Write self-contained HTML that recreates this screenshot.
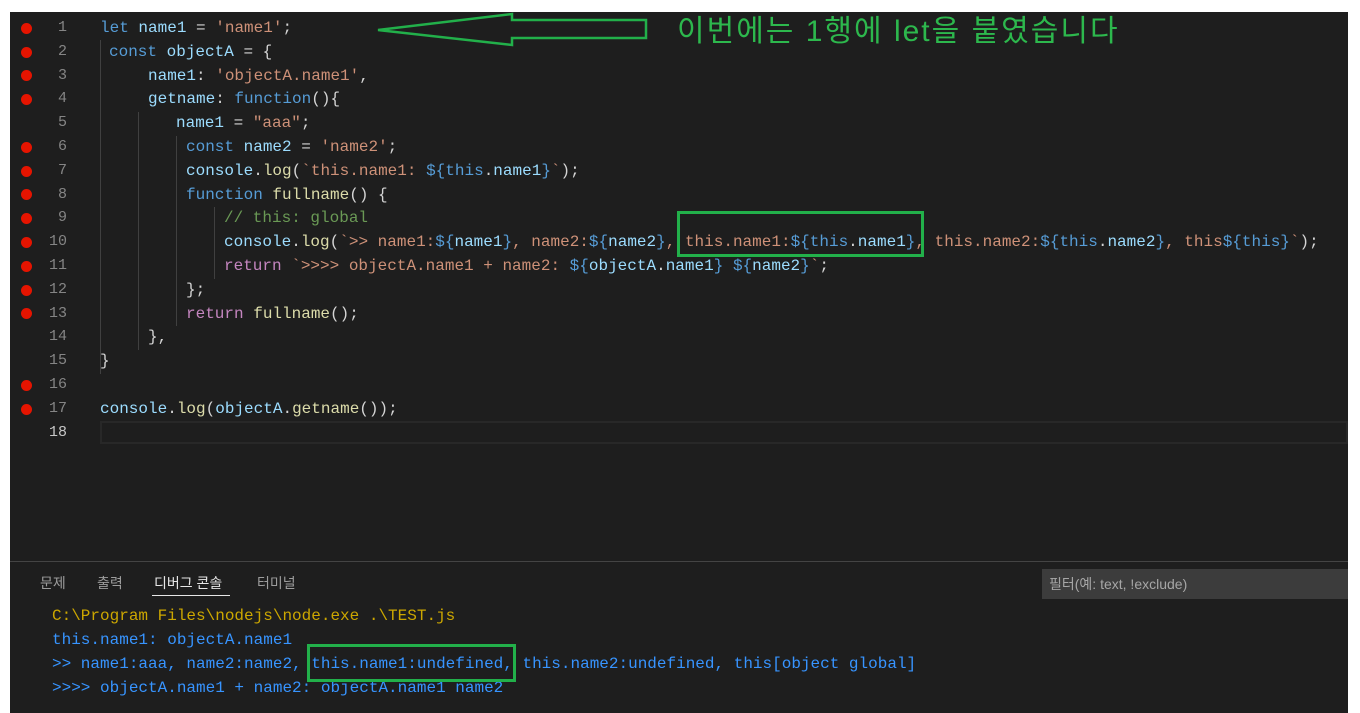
<!DOCTYPE html>
<html><head><meta charset="utf-8"><style>
*{margin:0;padding:0;box-sizing:border-box}
body{width:1360px;height:713px;background:#fff;position:relative;overflow:hidden;font-family:"Liberation Mono",monospace}
#ed{position:absolute;left:10px;top:12px;width:1338px;height:701px;background:#1e1e1e}
.ln{position:absolute;height:24px;line-height:24px;font-size:16px;white-space:pre;color:#d4d4d4}
.num{position:absolute;width:30px;left:37px;text-align:right;font-size:15px;color:#858585;line-height:24px;height:24px;font-family:"Liberation Mono",monospace}
.dot{position:absolute;left:21px;width:11px;height:11px;border-radius:50%;background:#e51400}
.g{position:absolute;width:1px;background:#404040}
.k{color:#569cd6}.v{color:#9cdcfe}.s{color:#ce9178}.f{color:#dcdcaa}.c{color:#6a9955}.r{color:#c586c0}
.tab{position:absolute;top:573px;font-family:"Liberation Sans","Noto Sans CJK KR",sans-serif;font-size:14px;color:#9d9d9d}
.out{position:absolute;left:52px;font-size:16px;line-height:24px;height:24px;white-space:pre;color:#3794ff}
.box{position:absolute;border:3px solid #22b04a}
</style></head><body>
<div id="ed"></div>
<div class="g" style="left:100px;top:40px;height:334px"></div>
<div class="g" style="left:138px;top:112px;height:238px"></div>
<div class="g" style="left:176px;top:136px;height:190px"></div>
<div class="g" style="left:214px;top:207px;height:72px"></div>
<div style="position:absolute;left:100px;top:421px;width:1248px;height:23px;border:2px solid #282828"></div>

<div class="num" style="top:16px">1</div><div class="dot" style="top:23px"></div>
<div class="num" style="top:40px">2</div><div class="dot" style="top:47px"></div>
<div class="num" style="top:64px">3</div><div class="dot" style="top:70px"></div>
<div class="num" style="top:87px">4</div><div class="dot" style="top:94px"></div>
<div class="num" style="top:111px">5</div>
<div class="num" style="top:135px">6</div><div class="dot" style="top:142px"></div>
<div class="num" style="top:159px">7</div><div class="dot" style="top:166px"></div>
<div class="num" style="top:183px">8</div><div class="dot" style="top:189px"></div>
<div class="num" style="top:206px">9</div><div class="dot" style="top:213px"></div>
<div class="num" style="top:230px">10</div><div class="dot" style="top:237px"></div>
<div class="num" style="top:254px">11</div><div class="dot" style="top:261px"></div>
<div class="num" style="top:278px">12</div><div class="dot" style="top:285px"></div>
<div class="num" style="top:302px">13</div><div class="dot" style="top:308px"></div>
<div class="num" style="top:325px">14</div>
<div class="num" style="top:349px">15</div>
<div class="num" style="top:373px">16</div><div class="dot" style="top:380px"></div>
<div class="num" style="top:397px">17</div><div class="dot" style="top:404px"></div>
<div class="num" style="top:421px;color:#c6c6c6">18</div>

<div class="ln" style="left:100px;top:16px"><span class="k">let</span> <span class="v">name1</span> = <span class="s">'name1'</span>;</div>
<div class="ln" style="left:109px;top:40px"><span class="k">const</span> <span class="v">objectA</span> = {</div>
<div class="ln" style="left:148px;top:64px"><span class="v">name1</span>: <span class="s">'objectA.name1'</span>,</div>
<div class="ln" style="left:148px;top:87px"><span class="v">getname</span>: <span class="k">function</span>(){</div>
<div class="ln" style="left:176px;top:111px"><span class="v">name1</span> = <span class="s">"aaa"</span>;</div>
<div class="ln" style="left:186px;top:135px"><span class="k">const</span> <span class="v">name2</span> = <span class="s">'name2'</span>;</div>
<div class="ln" style="left:186px;top:159px"><span class="v">console</span>.<span class="f">log</span>(<span class="s">`this.name1: </span><span class="k">${this</span>.<span class="v">name1</span><span class="k">}</span><span class="s">`</span>);</div>
<div class="ln" style="left:186px;top:183px"><span class="k">function</span> <span class="f">fullname</span>() {</div>
<div class="ln" style="left:224px;top:206px"><span class="c">// this: global</span></div>
<div class="ln" style="left:224px;top:230px"><span class="v">console</span>.<span class="f">log</span>(<span class="s">`&gt;&gt; name1:</span><span class="k">${</span><span class="v">name1</span><span class="k">}</span><span class="s">, name2:</span><span class="k">${</span><span class="v">name2</span><span class="k">}</span><span class="s">, this.name1:</span><span class="k">${this</span>.<span class="v">name1</span><span class="k">}</span><span class="s">, this.name2:</span><span class="k">${this</span>.<span class="v">name2</span><span class="k">}</span><span class="s">, this</span><span class="k">${this}</span><span class="s">`</span>);</div>
<div class="ln" style="left:224px;top:254px"><span class="r">return</span> <span class="s">`&gt;&gt;&gt;&gt; objectA.name1 + name2: </span><span class="k">${</span><span class="v">objectA</span>.<span class="v">name1</span><span class="k">}</span><span class="s"> </span><span class="k">${</span><span class="v">name2</span><span class="k">}</span><span class="s">`</span>;</div>
<div class="ln" style="left:186px;top:278px">};</div>
<div class="ln" style="left:186px;top:302px"><span class="r">return</span> <span class="f">fullname</span>();</div>
<div class="ln" style="left:148px;top:325px">},</div>
<div class="ln" style="left:100px;top:349px">}</div>
<div class="ln" style="left:100px;top:397px"><span class="v">console</span>.<span class="f">log</span>(<span class="v">objectA</span>.<span class="f">getname</span>());</div>

<svg style="position:absolute;left:0;top:0" width="1360" height="60">
<polygon points="378,30 512,14 512,20 646,20 646,38 512,38 512,45" fill="none" stroke="#22b04a" stroke-width="2.5"/>
</svg>
<div style="position:absolute;left:677px;top:12px;font-family:'Liberation Sans','Noto Sans CJK KR',sans-serif;font-size:30px;letter-spacing:2px;color:#2db84d;white-space:nowrap;line-height:40px">이번에는 1행에 let을 붙였습니다</div>
<div class="box" style="left:677px;top:211px;width:247px;height:46px"></div>

<div style="position:absolute;left:10px;top:561px;width:1338px;height:1px;background:#444"></div>
<div class="tab" style="left:40px">문제</div>
<div class="tab" style="left:97px">출력</div>
<div class="tab" style="left:154px;color:#e7e7e7">디버그 콘솔</div>
<div style="position:absolute;left:152px;top:595px;width:78px;height:1px;background:#e7e7e7"></div>
<div class="tab" style="left:257px">터미널</div>
<div style="position:absolute;left:1042px;top:569px;width:306px;height:30px;background:#3c3c3c;font-family:'Liberation Sans','Noto Sans CJK KR',sans-serif;font-size:14px;color:#a6a6a6;line-height:30px;padding-left:7px">필터(예: text, !exclude)</div>

<div class="out" style="top:604px;color:#cca700">C:\Program Files\nodejs\node.exe .\TEST.js</div>
<div class="out" style="top:628px">this.name1: objectA.name1</div>
<div class="out" style="top:652px">&gt;&gt; name1:aaa, name2:name2, this.name1:undefined, this.name2:undefined, this[object global]</div>
<div class="out" style="top:676px">&gt;&gt;&gt;&gt; objectA.name1 + name2: objectA.name1 name2</div>
<div class="box" style="left:307px;top:644px;width:209px;height:38px"></div>
</body></html>
